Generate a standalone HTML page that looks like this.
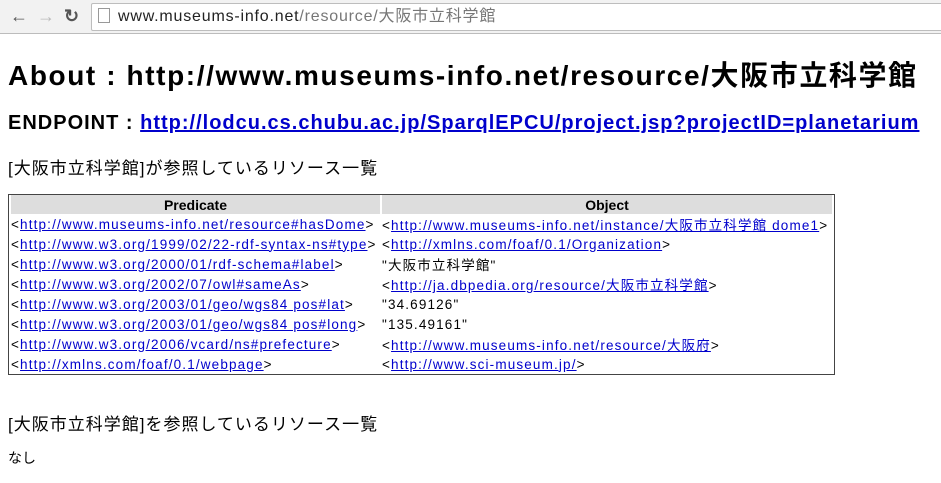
<!DOCTYPE html>
<html><head><meta charset="utf-8"><style>
body{margin:0;width:941px;height:483px;overflow:hidden;background:#fff;font-family:"Liberation Sans","Noto Sans CJK JP",sans-serif;color:#000}
.bar{position:absolute;left:0;top:0;width:941px;height:33px;background:#f2f2f2;border-bottom:1px solid #bcbcbc}
.url{position:absolute;left:91px;top:3px;width:860px;height:26px;background:#fff;border:1px solid #bdbdbd;border-radius:2px;font-size:16px;line-height:26px;letter-spacing:0.8px}
.url span.d{color:#222}.url span.p{color:#777}
.ic{position:absolute;top:6px;font-size:18px;color:#555;font-weight:bold}
a{color:#00c;text-decoration:underline}
h1{position:absolute;left:8px;top:54px;margin:0;font-size:28px;font-weight:bold;white-space:nowrap;letter-spacing:1.6px}
h2{position:absolute;left:8px;top:112px;margin:0;font-size:20px;font-weight:bold;white-space:nowrap;letter-spacing:1.0px}
.h3{position:absolute;left:8px;font-size:17px;white-space:nowrap;letter-spacing:1px}
table{position:absolute;left:8px;top:194px;width:827px;border:1px solid #444;border-collapse:separate;border-spacing:2px 0;font-size:13.5px}
th{background:#ddd;font-weight:bold;height:19px;padding:0;font-size:14px}
td{height:20px;padding:0;white-space:nowrap;letter-spacing:1.15px}
</style></head><body>
<div class="bar">
<span class="ic" style="left:10px">&#8592;</span>
<span class="ic" style="left:37px;color:#bbb">&#8594;</span>
<span class="ic" style="left:64px">&#8635;</span>
<div class="url"><span style="display:inline-block;width:10px;height:13px;border:1px solid #999;margin:0 8px 0 6px;vertical-align:-2px"></span><span class="d">www.museums-info.net</span><span class="p">/resource/大阪市立科学館</span></div>
</div>
<h1>About : http://www.museums-info.net/resource/大阪市立科学館</h1>
<h2>ENDPOINT : <a>http://lodcu.cs.chubu.ac.jp/SparqlEPCU/project.jsp?projectID=planetarium</a></h2>
<div class="h3" style="top:154px">[大阪市立科学館]が参照しているリソース一覧</div>
<table>
<tr><th style="width:369px">Predicate</th><th>Object</th></tr>
<tr><td>&lt;<a>http://www.museums-info.net/resource#hasDome</a>&gt;</td><td>&lt;<a>http://www.museums-info.net/instance/大阪市立科学館 dome1</a>&gt;</td></tr>
<tr><td>&lt;<a>http://www.w3.org/1999/02/22-rdf-syntax-ns#type</a>&gt;</td><td>&lt;<a>http://xmlns.com/foaf/0.1/Organization</a>&gt;</td></tr>
<tr><td>&lt;<a>http://www.w3.org/2000/01/rdf-schema#label</a>&gt;</td><td>"大阪市立科学館"</td></tr>
<tr><td>&lt;<a>http://www.w3.org/2002/07/owl#sameAs</a>&gt;</td><td>&lt;<a>http://ja.dbpedia.org/resource/大阪市立科学館</a>&gt;</td></tr>
<tr><td>&lt;<a>http://www.w3.org/2003/01/geo/wgs84 pos#lat</a>&gt;</td><td>"34.69126"</td></tr>
<tr><td>&lt;<a>http://www.w3.org/2003/01/geo/wgs84 pos#long</a>&gt;</td><td>"135.49161"</td></tr>
<tr><td>&lt;<a>http://www.w3.org/2006/vcard/ns#prefecture</a>&gt;</td><td>&lt;<a>http://www.museums-info.net/resource/大阪府</a>&gt;</td></tr>
<tr><td>&lt;<a>http://xmlns.com/foaf/0.1/webpage</a>&gt;</td><td>&lt;<a>http://www.sci-museum.jp/</a>&gt;</td></tr>
</table>
<div class="h3" style="top:410px">[大阪市立科学館]を参照しているリソース一覧</div>
<div style="position:absolute;left:8px;top:448px;font-size:14px">なし</div>
</body></html>
